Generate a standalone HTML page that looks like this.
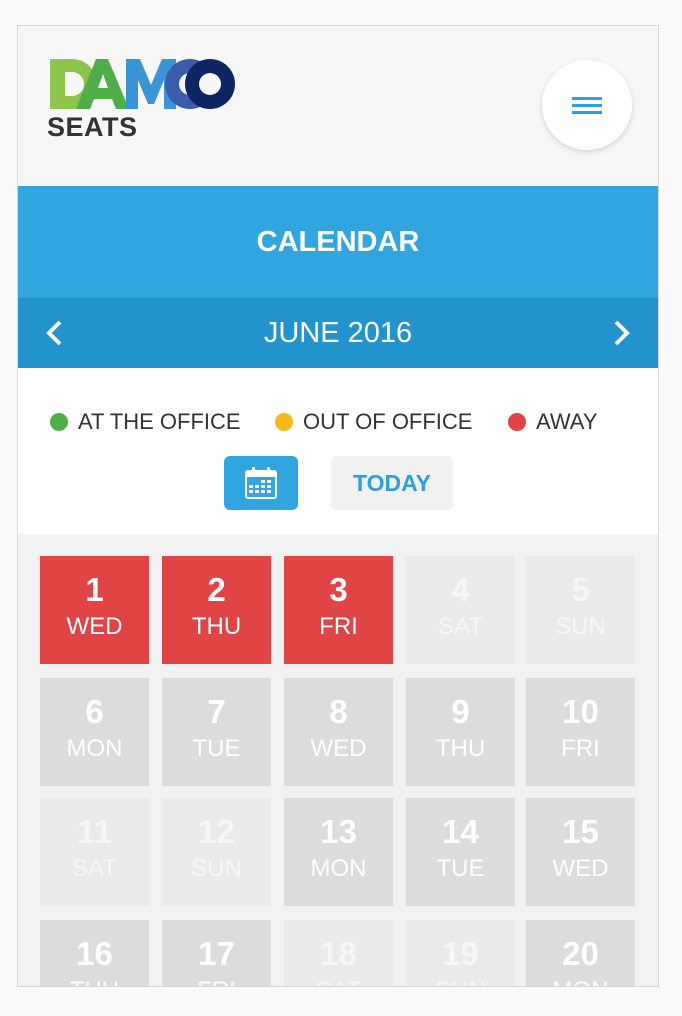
<!DOCTYPE html>
<html><head><style>
*{margin:0;padding:0;box-sizing:border-box}
body{width:682px;height:1016px;background:#fafafa;font-family:"Liberation Sans",sans-serif;position:relative;overflow:hidden}
#f{position:absolute;left:17px;top:25px;width:642px;height:962px;border:1px solid #d8d8d8;overflow:hidden;background:#f2f2f2}
#hd{position:absolute;left:0;top:0;width:640px;height:160px;background:#f7f7f7}
.menu{position:absolute;left:524px;top:34px;width:90px;height:90px;border-radius:50%;background:#fff;box-shadow:0 2px 6px rgba(0,0,0,.15)}
.menu i{position:absolute;left:30px;width:30px;height:3px;background:#2d9fdc}
#t{position:absolute;top:160px;left:0;width:640px;height:112px;background:#31a5e0;color:#fff;font-weight:bold;font-size:29px;text-align:center;line-height:112px}
#m{position:absolute;top:272px;left:0;width:640px;height:70px;background:#2393cd;color:#fff;font-size:29px;text-align:center;line-height:70px}
#lg{position:absolute;top:342px;left:0;width:640px;height:166px;background:#fff}
.lgt{position:absolute;top:41px;font-size:22px;color:#333}
.dot{display:inline-block;width:18px;height:18px;border-radius:50%;vertical-align:-2px;margin-right:10px}
.c{position:absolute;width:109px;height:108px;text-align:center;color:#fff}
.c b{display:block;font-size:33px;margin-top:16px;line-height:36px}
.c span{display:block;font-size:24px;line-height:30px;margin-top:4px}
.r{background:#e04444}.g{background:#dcdcdc}.l{background:#ebebeb;color:#f7f7f7}
</style></head><body>
<div id="f">
<div id="hd">
<svg style="position:absolute;left:30px;top:32px" width="190" height="52" viewBox="0 0 190 52">
<path d="M2 1h22a25 25 0 0 1 0 50H2z" fill="#8dc44e"/><path d="M17 14h7a12 12 0 0 1 0 24h-7z" fill="#f7f7f7"/>
<path d="M28 51L48 1h12l21 50H68l-4-10H46l-4 10z" fill="#4fae47"/><path d="M50 30h10l-5-14z" fill="#f7f7f7"/>
<path d="M78 51V1h14l11 26 11-26h14v50h-12V22l-10 24h-6l-10-24v29z" fill="#3a94d6"/>
<circle cx="142" cy="26" r="25" fill="#3b5ca8"/><circle cx="142" cy="26" r="11" fill="#f7f7f7"/>
<circle cx="162" cy="26" r="25" fill="#0d2562"/><circle cx="162" cy="26" r="11" fill="#f7f7f7"/>
</svg>
<div style="position:absolute;left:29px;top:86px;font-size:27px;font-weight:bold;color:#333;letter-spacing:0.5px">SEATS</div>
<div class="menu"><i style="top:37px"></i><i style="top:44px"></i><i style="top:51px"></i></div>
</div>
<div id="t">CALENDAR</div>
<div id="m"><svg style="position:absolute;left:26px;top:21px" width="20" height="28"><path d="M16 3L5 14l11 11" stroke="#fff" stroke-width="4" fill="none"/></svg>JUNE 2016<svg style="position:absolute;left:594px;top:21px" width="20" height="28"><path d="M4 3l11 11L4 25" stroke="#fff" stroke-width="4" fill="none"/></svg></div>
<div id="lg">
<div class="lgt" style="left:32px"><span class="dot" style="background:#4fae47"></span>AT THE OFFICE</div>
<div class="lgt" style="left:257px"><span class="dot" style="background:#f6b81a"></span>OUT OF OFFICE</div>
<div class="lgt" style="left:490px"><span class="dot" style="background:#e04444"></span>AWAY</div>
<div style="position:absolute;left:206px;top:88px;width:74px;height:54px;background:#31a5e0;border-radius:6px">
<svg style="position:absolute;left:20px;top:10px" width="34" height="34" viewBox="0 0 34 34"><rect x="2" y="5" width="30" height="27" rx="2" fill="none" stroke="#fff" stroke-width="2"/><rect x="2" y="5" width="30" height="6" fill="#fff"/><rect x="8" y="1" width="3" height="7" rx="1.5" fill="#fff"/><rect x="23" y="1" width="3" height="7" rx="1.5" fill="#fff"/>
<g fill="#fff"><rect x="17" y="14" width="4" height="3"/><rect x="23" y="14" width="4" height="3"/><rect x="5" y="19" width="4" height="3"/><rect x="11" y="19" width="4" height="3"/><rect x="17" y="19" width="4" height="3"/><rect x="23" y="19" width="4" height="3"/><rect x="5" y="24" width="4" height="3"/><rect x="11" y="24" width="4" height="3"/><rect x="17" y="24" width="4" height="3"/><rect x="23" y="24" width="4" height="3"/></g></svg></div>
<div style="position:absolute;left:313px;top:88px;width:122px;height:54px;background:#f1f1f1;border-radius:6px;color:#2d9fdc;font-weight:bold;font-size:23px;text-align:center;line-height:54px">TODAY</div>
</div>
<div class="c r" style="left:22px;top:530px"><b>1</b><span>WED</span></div>
<div class="c r" style="left:144px;top:530px"><b>2</b><span>THU</span></div>
<div class="c r" style="left:266px;top:530px"><b>3</b><span>FRI</span></div>
<div class="c l" style="left:388px;top:530px"><b>4</b><span>SAT</span></div>
<div class="c l" style="left:508px;top:530px"><b>5</b><span>SUN</span></div>
<div class="c g" style="left:22px;top:652px"><b>6</b><span>MON</span></div>
<div class="c g" style="left:144px;top:652px"><b>7</b><span>TUE</span></div>
<div class="c g" style="left:266px;top:652px"><b>8</b><span>WED</span></div>
<div class="c g" style="left:388px;top:652px"><b>9</b><span>THU</span></div>
<div class="c g" style="left:508px;top:652px"><b>10</b><span>FRI</span></div>
<div class="c l" style="left:22px;top:772px"><b>11</b><span>SAT</span></div>
<div class="c l" style="left:144px;top:772px"><b>12</b><span>SUN</span></div>
<div class="c g" style="left:266px;top:772px"><b>13</b><span>MON</span></div>
<div class="c g" style="left:388px;top:772px"><b>14</b><span>TUE</span></div>
<div class="c g" style="left:508px;top:772px"><b>15</b><span>WED</span></div>
<div class="c g" style="left:22px;top:894px"><b>16</b><span>THU</span></div>
<div class="c g" style="left:144px;top:894px"><b>17</b><span>FRI</span></div>
<div class="c l" style="left:266px;top:894px"><b>18</b><span>SAT</span></div>
<div class="c l" style="left:388px;top:894px"><b>19</b><span>SUN</span></div>
<div class="c g" style="left:508px;top:894px"><b>20</b><span>MON</span></div>
</div>
</body></html>
